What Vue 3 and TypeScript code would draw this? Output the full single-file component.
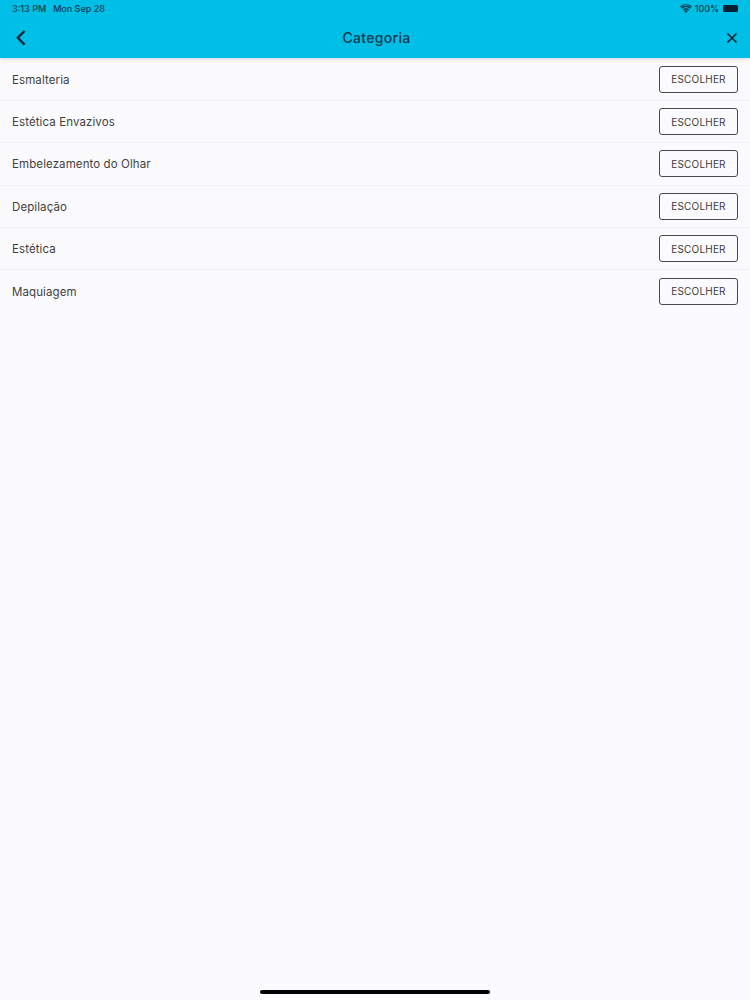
<script setup lang="ts">
// categorias exibidas na lista
const categorias: string[] = [
  'Esmalteria',
  'Estética Envazivos',
  'Embelezamento do Olhar',
  'Depilação',
  'Estética',
  'Maquiagem',
];
</script>

<template>
  <div class="page">
    <header class="header">
      <div class="status-bar">
        <div class="status-left">
          <span>3:13 PM</span>
          <span>Mon Sep 28</span>
        </div>
        <div class="status-right">
          <svg class="wifi" width="12" height="9" viewBox="0 0 12 9">
            <path d="M6 9 L4.2 7 A2.6 2.6 0 0 1 7.8 7 Z" fill="#0b2a3a" />
            <path d="M2.9 5.6 A4.5 4.5 0 0 1 9.1 5.6 L8.2 6.5 A3.2 3.2 0 0 0 3.8 6.5 Z" fill="#0b2a3a" />
            <path d="M1.1 3.8 A7 7 0 0 1 10.9 3.8 L10 4.7 A5.7 5.7 0 0 0 2 4.7 Z" fill="#0b2a3a" />
            <path d="M0 2.6 A8.6 8.6 0 0 1 12 2.6 L11.4 3.2 A7.8 7.8 0 0 0 0.6 3.2 Z" fill="#0b2a3a" />
          </svg>
          <span>100%</span>
          <span class="battery"></span>
        </div>
      </div>
      <div class="nav-bar">
        <button class="icon-btn" aria-label="Voltar">
          <svg width="12" height="18" viewBox="0 0 12 18">
            <path d="M9.5 2 L2.8 8.8 L9.5 15.6" fill="none" stroke="#06202f" stroke-width="2.3" />
          </svg>
        </button>
        <h1 class="title">Categoria</h1>
        <button class="icon-btn" aria-label="Fechar">
          <svg width="12" height="12" viewBox="0 0 12 12">
            <path d="M1.5 1.5 L10.5 10.5 M10.5 1.5 L1.5 10.5" fill="none" stroke="#06202f" stroke-width="1.6" />
          </svg>
        </button>
      </div>
    </header>

    <ul class="list">
      <li v-for="categoria in categorias" :key="categoria" class="row">
        <span class="name">{{ categoria }}</span>
        <button class="choose">ESCOLHER</button>
      </li>
    </ul>

    <div class="home-indicator"></div>
  </div>
</template>

<style>
html,
body {
  margin: 0;
  background: #fbfbfd;
}
</style>

<style scoped>
.page {
  position: relative;
  display: flex;
  flex-direction: column;
  width: 750px;
  height: 1000px;
  overflow: hidden;
  background: #fbfbfd;
  font-family: Inter, "Liberation Sans", sans-serif;
}
.header {
  display: flex;
  flex-direction: column;
  height: 58px;
  flex-shrink: 0;
  background: #00bfe6;
  box-shadow: 0 1px 4px rgba(0, 0, 0, 0.16);
  z-index: 1;
}
.status-bar {
  display: flex;
  justify-content: space-between;
  align-items: center;
  height: 17px;
  padding: 0 12px;
  font-size: 9px;
  font-weight: 500;
  color: #0b3a50;
}
.status-left {
  display: flex;
  gap: 7px;
}
.status-right {
  display: flex;
  align-items: center;
  gap: 3px;
}
.battery {
  width: 15px;
  height: 7px;
  margin-left: 1px;
  border-radius: 1.5px;
  background: #06202f;
}
.nav-bar {
  display: flex;
  flex: 1;
  justify-content: space-between;
  align-items: center;
  padding: 0 12px 0 15px;
}
.icon-btn {
  display: flex;
  padding: 0;
  border: none;
  background: none;
}
.title {
  margin: 0;
  font-size: 14px;
  font-weight: 500;
  letter-spacing: 0.3px;
  color: #0b3a50;
}
.list {
  margin: 0;
  padding: 0.5px 0 0;
  list-style: none;
}
.row {
  display: flex;
  justify-content: space-between;
  align-items: center;
  box-sizing: border-box;
  height: 42.4px;
  padding: 0 12px;
  border-bottom: 1px solid #f1f1f3;
}
.row:last-child {
  border-bottom-color: transparent;
}
.name {
  padding-top: 1px;
  font-size: 11.5px;
  letter-spacing: 0.1px;
  color: #3f3f42;
}
.choose {
  box-sizing: border-box;
  width: 79px;
  height: 27px;
  padding: 0;
  border: 1px solid #4a4a4e;
  border-radius: 3px;
  background: transparent;
  font-family: inherit;
  font-size: 10px;
  font-weight: 400;
  letter-spacing: 0.2px;
  color: #3a3a3c;
}
.home-indicator {
  position: absolute;
  left: 260px;
  bottom: 6px;
  width: 230px;
  height: 4px;
  border-radius: 2px;
  background: #000;
}
</style>
